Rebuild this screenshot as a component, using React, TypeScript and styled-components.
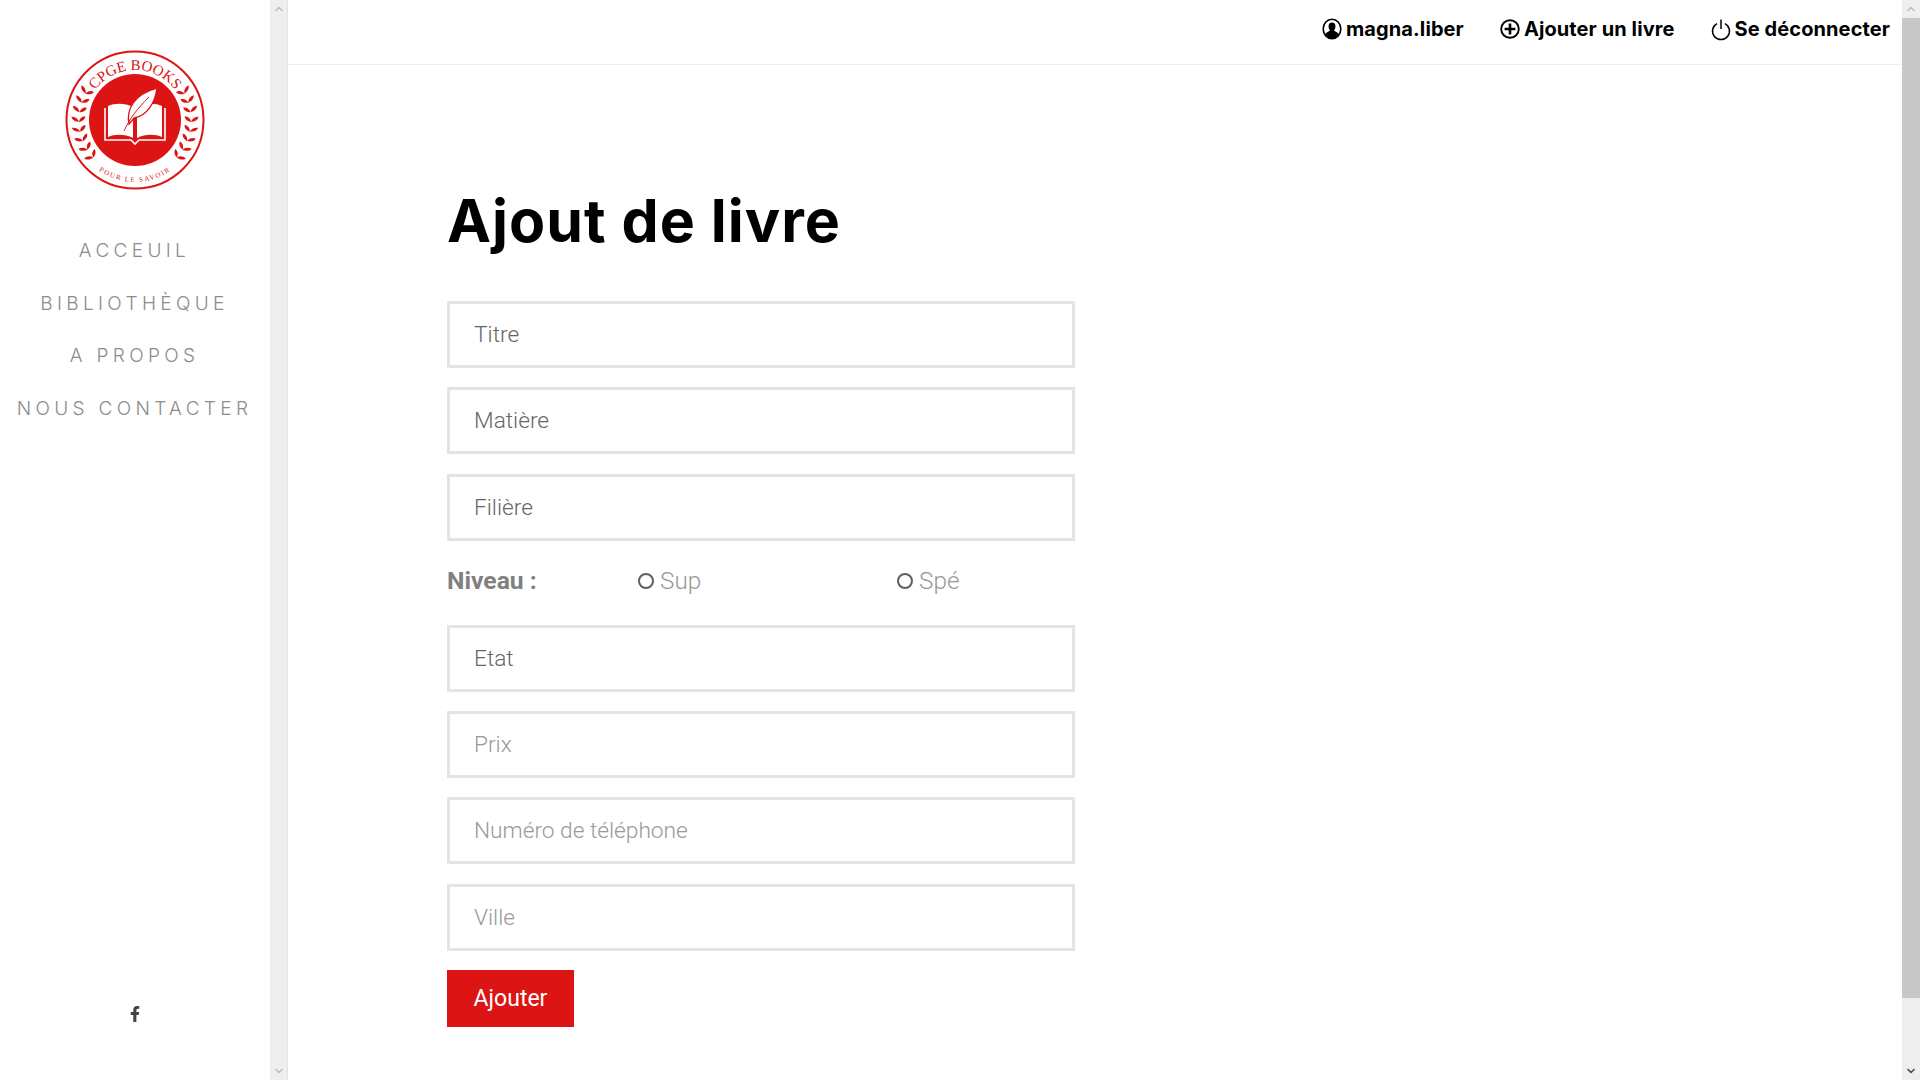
import styled, { createGlobalStyle } from "styled-components";
import { ChevronDown, ChevronUp } from "lucide-react";
import { FaFacebookF } from "react-icons/fa";

const GlobalStyle = createGlobalStyle`
    html, body {
        margin: 0;
        padding: 0;
        height: 100%;
        overflow: hidden;
        background: #fff;
    }
    * { box-sizing: border-box; }
`;

const Page = styled.div`
    display: flex;
    width: 100%;
    height: 100vh;
    background: #fff;
`;

const Sidebar = styled.aside`
    width: 270px;
    flex-shrink: 0;
    display: flex;
    flex-direction: column;
    align-items: center;
    padding: 50px 1px 58px 0;
`;

const NavList = styled.nav`
    display: flex;
    flex-direction: column;
    align-items: center;
    gap: 26px;
    margin-top: 48px;
`;

const NavLink = styled.a`
    font-family: Inter, "Liberation Sans", sans-serif;
    font-size: 19px;
    line-height: 26.5px;
    font-weight: 300;
    letter-spacing: 4.35px;
    color: #8c8c8c;
`;

const Social = styled.a`
    margin-top: auto;
    display: flex;
    color: #444;
    font-size: 16px;
`;

const ScrollTrack = styled.div<{ $edge?: boolean }>`
    width: 18px;
    flex-shrink: 0;
    height: 100%;
    display: flex;
    flex-direction: column;
    align-items: center;
    background: #eee;
    border-right: ${(p) => (p.$edge ? "0" : "1px solid #e4e4e4")};
`;

const ScrollArrow = styled.div<{ $tone: string }>`
    height: 18px;
    flex-shrink: 0;
    width: 100%;
    display: flex;
    align-items: center;
    justify-content: center;
    color: ${(p) => p.$tone};
`;

const ScrollThumb = styled.div`
    width: 100%;
    height: 980px;
    flex-shrink: 0;
    background: #c8c8c8;
`;

const ScrollGap = styled.div`
    flex: 1;
`;

const Main = styled.main`
    flex: 1;
    min-width: 0;
    display: flex;
    flex-direction: column;
`;

const TopBar = styled.header`
    height: 65px;
    flex-shrink: 0;
    display: flex;
    justify-content: flex-end;
    align-items: flex-start;
    gap: 36px;
    padding: 17px 12px 0 0;
    border-bottom: 1px solid #eee;
`;

const TopLink = styled.a`
    display: flex;
    align-items: center;
    gap: 4px;
    font-family: Inter, "Liberation Sans", sans-serif;
    font-size: 20px;
    line-height: 24px;
    font-weight: 700;
    letter-spacing: 0.1px;
    color: #000;
    white-space: nowrap;
`;

const Content = styled.div`
    width: 628px;
    margin-left: 159px;
    display: flex;
    flex-direction: column;
`;

const Title = styled.h1`
    margin: 120px 0 0;
    font-family: Inter, "Liberation Sans", sans-serif;
    font-size: 59px;
    line-height: 72px;
    font-weight: 700;
    letter-spacing: 1px;
    color: #000;
`;

const Form = styled.form`
    display: flex;
    flex-direction: column;
    gap: 19.4px;
    margin-top: 44px;
`;

const Field = styled.input<{ $filled?: boolean }>`
    width: 100%;
    height: 67px;
    padding: 0 24px;
    border: 3px solid #e4e4e4;
    border-radius: 0;
    background: #fff;
    outline: none;
    font-family: Roboto, "Liberation Sans", sans-serif;
    font-size: 22.7px;
    font-weight: 300;
    color: #666;

    &::placeholder {
        color: ${(p) => (p.$filled ? "#666" : "#999")};
        opacity: 1;
    }
`;

const LevelRow = styled.div`
    display: flex;
    align-items: center;
    height: 42px;
    margin: -1px 0 4px;
    font-family: Roboto, "Liberation Sans", sans-serif;
    font-size: 24.3px;
`;

const LevelLabel = styled.span`
    width: 191px;
    font-size: 24.7px;
    font-weight: 700;
    color: #808080;
`;

const LevelOption = styled.label<{ $width: number }>`
    width: ${(p) => p.$width}px;
    display: flex;
    align-items: center;
    gap: 6px;
    font-weight: 300;
    color: #999;
`;

const Radio = styled.input`
    appearance: none;
    width: 16px;
    height: 16px;
    margin: 1px 0 0;
    border: 2px solid #5f5f5f;
    border-radius: 50%;
    background: #fff;
`;

const SubmitButton = styled.button`
    align-self: flex-start;
    width: 127px;
    height: 57px;
    margin-top: 0;
    border: 0;
    background: #dc1414;
    color: #fff;
    font-family: Roboto, "Liberation Sans", sans-serif;
    font-size: 23px;
    font-weight: 400;
`;

// rotation of each laurel pair around the badge centre, lower to upper
const LAUREL = [-42, -32, -22, -12, -2, 8, 18, 28];

function Laurel() {
    return (
        <g fill="#dc1414">
            {LAUREL.map((turn) => (
                <g key={turn} transform={`rotate(${turn} 70 70) translate(14 70)`}>
                    <path d="M0 0C-3 -0.5 -6.5 -1.5 -7.5 -5.5C-4 -5.5 -1 -3.5 0 0Z" />
                    <path d="M0 0C3 -0.5 6 -2 6.5 -5.5C3 -5.5 0.5 -3.5 0 0Z" />
                </g>
            ))}
        </g>
    );
}

function Logo() {
    return (
        <svg width="140" height="140" viewBox="0 0 140 140">
            <defs>
                <path id="logo-top" d="M20 70A50 50 0 0 1 120 70" />
                <path id="logo-bottom" d="M8 70A62 62 0 0 0 132 70" />
            </defs>
            <circle cx="70" cy="70" r="68.5" fill="#fff" stroke="#dc1414" strokeWidth="2" />
            <circle cx="70" cy="70" r="46" fill="#dc1414" />
            <text fontFamily="'Liberation Serif', serif" fontSize="15" fill="#dc1414">
                <textPath href="#logo-top" startOffset="50%" textAnchor="middle">CPGE BOOKS</textPath>
            </text>
            <text fontFamily="'Liberation Serif', serif" fontSize="7" letterSpacing="1.5" fill="#dc1414">
                <textPath href="#logo-bottom" startOffset="50%" textAnchor="middle">POUR LE SAVOIR</textPath>
            </text>
            <Laurel />
            <g transform="matrix(-1 0 0 1 140 0)"><Laurel /></g>
            <path d="M43 56C50 53 60 53 68 57V88C60 84 50 84 43 87Z" fill="#fff" />
            <path d="M97 56C90 53 80 53 72 57V88C80 84 90 84 97 87Z" fill="#fff" />
            <path d="M40 58V90H66L70 94L74 90H100V58" fill="none" stroke="#fff" strokeWidth="1.6" />
            <path d="M64 74C61 60 69 44 92 38C90 53 82 66 69 68L64 74Z" fill="#fff" stroke="#dc1414" strokeWidth="1.3" />
            <path d="M59 81C65 68 72 59 84 47" fill="none" stroke="#dc1414" strokeWidth="1" />
        </svg>
    );
}

function UserIcon() {
    return (
        <svg width="20" height="22" viewBox="0 0 20 22">
            <ellipse cx="10" cy="11" rx="8.8" ry="9.8" fill="#fff" stroke="#000" strokeWidth="1.6" />
            <path d="M10 4.5C12.6 4.5 13.8 6.6 13.4 9.2C13.2 10.6 12.6 11.6 12 12.3C12.4 13.6 15.2 14 16.3 15.4C16.8 16 16.9 16.6 16.6 17C14.9 19.4 12.6 20.6 10 20.6C7.4 20.6 5.1 19.4 3.4 17C3.1 16.6 3.2 16 3.7 15.4C4.8 14 7.6 13.6 8 12.3C7.4 11.6 6.8 10.6 6.6 9.2C6.2 6.6 7.4 4.5 10 4.5Z" />
        </svg>
    );
}

function PlusIcon() {
    return (
        <svg width="20" height="22" viewBox="0 0 20 22">
            <circle cx="10" cy="11" r="8.8" fill="none" stroke="#000" strokeWidth="1.9" />
            <path d="M10 5.6V16.4M4.6 11H15.4" stroke="#000" strokeWidth="2.6" />
        </svg>
    );
}

function PowerIcon() {
    return (
        <svg width="20" height="24" viewBox="0 0 20 24">
            <path d="M10 2.5V12" stroke="#000" strokeWidth="1.5" />
            <path d="M6 6.6A8.5 8.5 0 1 0 14 6.6" fill="none" stroke="#000" strokeWidth="1.5" />
        </svg>
    );
}

const NAV_ITEMS = ["ACCEUIL", "BIBLIOTHÈQUE", "A PROPOS", "NOUS CONTACTER"];

export default function App() {
    return (
        <Page>
            <GlobalStyle />
            <Sidebar>
                <Logo />
                <NavList>
                    {NAV_ITEMS.map((item) => (
                        <NavLink key={item}>{item}</NavLink>
                    ))}
                </NavList>
                <Social><FaFacebookF /></Social>
            </Sidebar>
            <ScrollTrack>
                <ScrollArrow $tone="#bdbdbd"><ChevronUp size={12} strokeWidth={3} /></ScrollArrow>
                <ScrollGap />
                <ScrollArrow $tone="#bdbdbd"><ChevronDown size={12} strokeWidth={3} /></ScrollArrow>
            </ScrollTrack>
            <Main>
                <TopBar>
                    <TopLink><UserIcon />magna.liber</TopLink>
                    <TopLink><PlusIcon />Ajouter un livre</TopLink>
                    <TopLink><PowerIcon />Se déconnecter</TopLink>
                </TopBar>
                <Content>
                    <Title>Ajout de livre</Title>
                    <Form>
                        <Field $filled placeholder="Titre" />
                        <Field $filled placeholder="Matière" />
                        <Field $filled placeholder="Filière" />
                        <LevelRow>
                            <LevelLabel>Niveau :</LevelLabel>
                            <LevelOption $width={259}><Radio type="radio" name="niveau" />Sup</LevelOption>
                            <LevelOption $width={100}><Radio type="radio" name="niveau" />Spé</LevelOption>
                        </LevelRow>
                        <Field $filled placeholder="Etat" />
                        <Field placeholder="Prix" />
                        <Field placeholder="Numéro de téléphone" />
                        <Field placeholder="Ville" />
                        <SubmitButton type="button">Ajouter</SubmitButton>
                    </Form>
                </Content>
            </Main>
            <ScrollTrack $edge>
                <ScrollArrow $tone="#bdbdbd"><ChevronUp size={12} strokeWidth={3} /></ScrollArrow>
                <ScrollThumb />
                <ScrollGap />
                <ScrollArrow $tone="#505050"><ChevronDown size={12} strokeWidth={3.5} /></ScrollArrow>
            </ScrollTrack>
        </Page>
    );
}
